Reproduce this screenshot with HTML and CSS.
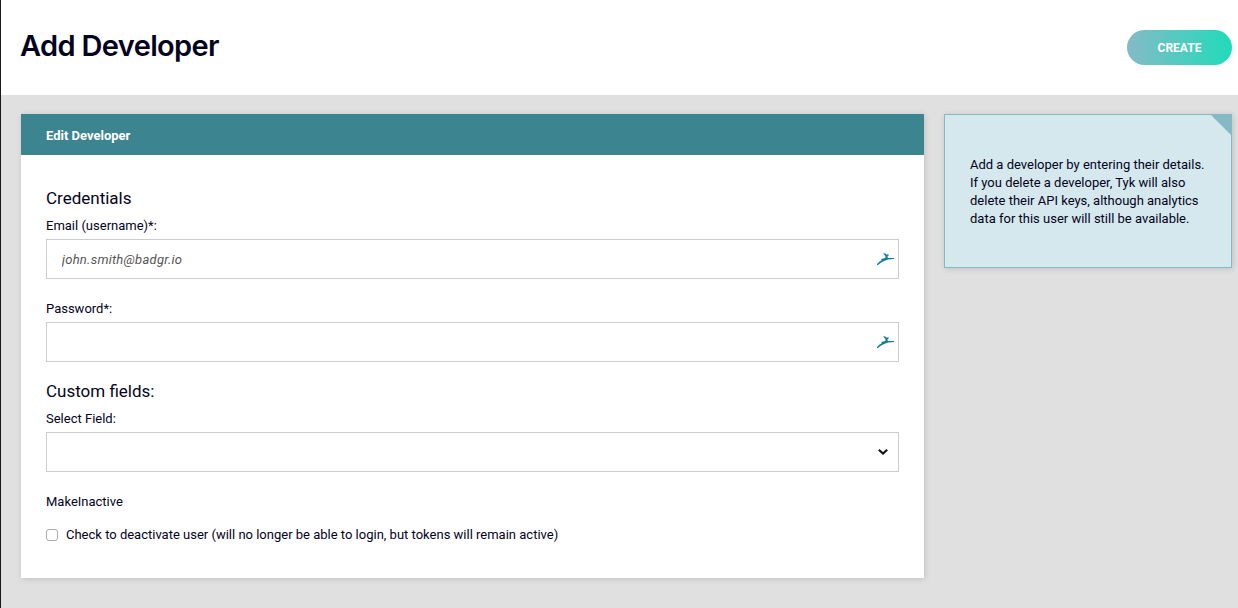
FILE: index.html
```html
<!DOCTYPE html>
<html lang="en">
<head>
<meta charset="utf-8">
<title>Add Developer</title>
<link rel="stylesheet" href="styles.css">
</head>
<body>
<header class="page-header">
  <h1 class="page-title">Add Developer</h1>
  <button class="create-button" type="button">CREATE</button>
</header>
<main class="content">
  <section class="panel">
    <h2 class="panel-title">Edit Developer</h2>
    <form class="panel-body">
      <h3 class="group-title">Credentials</h3>
      <label class="label" for="email">Email (username)*:</label>
      <div class="field">
        <input class="input" id="email" type="text" placeholder="john.smith@badgr.io">
        <svg class="bird" viewBox="0 0 18 14"><path d="M0 12 L2.6 9.6 L5 8 L4 7 L8.4 6 L8.4 4 L6 1.2 L8.3 1.4 L9.4 2.6 L11.8 2.4 L11.8 3.2 L10.6 4.2 L10.8 6 L17 6 L17 7 L11 7.6 L6.5 9.2 L3.4 11 L1 13 L0 13 Z"/></svg>
      </div>
      <label class="label" for="password">Password*:</label>
      <div class="field">
        <input class="input" id="password" type="password">
        <svg class="bird" viewBox="0 0 18 14"><path d="M0 12 L2.6 9.6 L5 8 L4 7 L8.4 6 L8.4 4 L6 1.2 L8.3 1.4 L9.4 2.6 L11.8 2.4 L11.8 3.2 L10.6 4.2 L10.8 6 L17 6 L17 7 L11 7.6 L6.5 9.2 L3.4 11 L1 13 L0 13 Z"/></svg>
      </div>
      <h3 class="group-title group-title-custom">Custom fields:</h3>
      <label class="label" for="custom">Select Field:</label>
      <div class="field">
        <select class="input" id="custom"><option></option></select>
        <svg class="chevron" viewBox="0 0 10 8"><path d="M.8 1.7 5 5.6 9.2 1.7"/></svg>
      </div>
      <span class="label">MakeInactive</span>
      <label class="check-row"><input class="checkbox" type="checkbox"><span>Check to deactivate user (will no longer be able to login, but tokens will remain active)</span></label>
    </form>
  </section>
  <aside class="note">
    <p class="note-text">Add a developer by entering their details. If you delete a developer, Tyk will also delete their API keys, although analytics data for this user will still be available.</p>
  </aside>
</main>
</body>
</html>
```
FILE: styles.css
```css
* { box-sizing: border-box; }
body {
  margin: 0;
  height: 608px;
  overflow: hidden;
  border-left: 1px solid #15161f;
  background: #e0e0e0;
  color: #03031c;
  font: 13px/18px Roboto, sans-serif;
}
.page-header {
  display: flex;
  align-items: center;
  justify-content: space-between;
  height: 95px;
  padding: 0 6px 0 19px;
  background: #fff;
}
.page-title {
  margin: 0 0 4px;
  font: 600 29px/36px Inter, Roboto, sans-serif;
  letter-spacing: -.65px;
}
.create-button {
  width: 105px;
  height: 35px;
  padding: 1px 0 0;
  border: 0;
  border-radius: 18px;
  background: linear-gradient(90deg, #85bac6, #20dbba);
  color: #fff;
  font: 700 12px/34px Roboto, sans-serif;
}
.content {
  display: flex;
  align-items: flex-start;
  gap: 20px;
  padding: 19px 6px 0 20px;
}
.panel {
  width: 903px;
  height: 464px;
  background: #fff;
  box-shadow: 1px 1px 6px rgba(0, 0, 0, .14);
}
.panel-title {
  margin: 0;
  height: 41px;
  padding: 1px 25px 0;
  background: #3b8490;
  color: #fff;
  font: 700 13px/41px Roboto, sans-serif;
}
.panel-body { padding: 32px 25px 0; }
.group-title {
  margin: 0 0 8px;
  font: 400 17px/22px Roboto, sans-serif;
}
.group-title-custom { margin-top: -3px; }
.label { display: block; height: 22px; }
.field { position: relative; height: 40px; margin-bottom: 21px; }
.input {
  display: block;
  width: 100%;
  height: 40px;
  padding: 0 15px;
  border: 1px solid #ccc;
  border-radius: 0;
  background: #fff;
  font: 13px Roboto, sans-serif;
  appearance: none;
}
.input::placeholder { color: #555; font-style: italic; letter-spacing: .24px; }
.bird {
  position: absolute;
  top: 13px;
  right: 4px;
  width: 18px;
  height: 14px;
  fill: #137c92;
}
.chevron {
  position: absolute;
  top: 16px;
  right: 11px;
  width: 10px;
  height: 8px;
  fill: none;
  stroke: #111;
  stroke-width: 2;
}
.check-row { display: flex; align-items: center; gap: 8px; margin-top: 11px; }
.checkbox {
  width: 12px;
  height: 12px;
  margin: 0;
  border: 1px solid #aaa;
  border-radius: 3px;
  background: #fff;
  appearance: none;
}
.note {
  position: relative;
  width: 288px;
  height: 154px;
  padding: 41px 20px 0 25px;
  border: 1px solid #85bac4;
  background: #d5e8ed;
  box-shadow: 1px 1px 6px rgba(0, 0, 0, .14);
}
.note::before {
  content: "";
  position: absolute;
  top: 0;
  right: 0;
  width: 20px;
  height: 20px;
  background: #85bac4;
  clip-path: polygon(0 0, 100% 0, 100% 100%);
}
.note-text { margin: 0; }
```
